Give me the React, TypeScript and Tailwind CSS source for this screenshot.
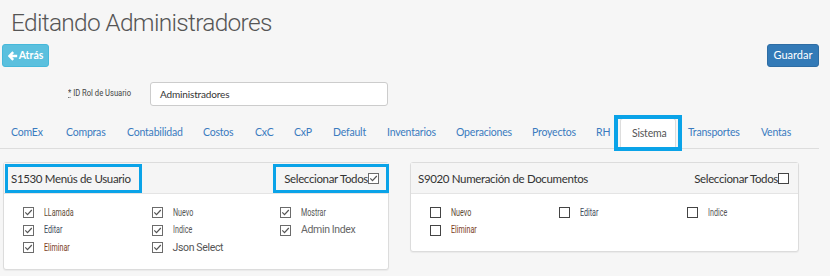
import React from "react";

const tabs: [string, number][] = [["ComEx",54],["Compras",61],["Contabilidad",76],["Costos",52],["CxC",39],["CxP",39],["Default",54],["Inventarios",69],["Operaciones",76],["Proyectos",64],["RH",36],["Sistema",56],["Transportes",73],["Ventas",60]];

function Box({ checked }: { checked: boolean }) {
  return (
    <svg width="11" height="11" viewBox="0 0 11 11" className="shrink-0">
      <rect x="0.5" y="0.5" width="10" height="10" fill="#fff" stroke={checked ? "#6b6b6b" : "#444"} strokeWidth="1" />
      {checked && <path d="M2.3 5.4 L4.5 7.6 L8.8 3.0" fill="none" stroke="#555" strokeWidth="1.2" />}
    </svg>
  );
}

type Item = { label: string; color?: string; narrow?: boolean } | null;

function Panel({ title, checked, rows, all, highlight, w, selW, selPr }: { title: string; checked: boolean; rows: Item[][]; all: boolean; highlight?: boolean; w: string; selW: string; selPr: string }) {
  const hl = highlight ? "border-[#0aa3e8]" : "border-transparent";
  return (
    <div className={`${w} bg-white border border-[#dcdcdc] rounded-[3px] shadow-[0_1px_1px_rgba(0,0,0,0.05)]`}>
      <div className="h-[31px] bg-[#f5f5f5] border-b border-[#e4e4e4] flex items-start justify-between pl-[1px] text-[11.5px] tracking-[-0.35px] text-[#333]">
        <div className={`mt-[1px] h-[29px] border-[3px] ${hl} flex items-center pl-[3px] whitespace-nowrap ${highlight ? "w-[137px]" : ""}`}>{title}</div>
        <div className={`mt-[1px] -mr-[1px] h-[29px] border-[3px] ${hl} flex items-center justify-end ${selPr} ${selW} whitespace-nowrap`}>Seleccionar Todos<Box checked={all} /></div>
      </div>
      <div className="pt-[10px] pb-[12px] pl-[19px]">
        {rows.map((r, i) => (
          <div key={i} className="grid grid-cols-[128.5px_128.5px_128.5px] h-[17.5px] items-center">
            {r.map((it, j) => (
              <div key={j} className="flex items-center">
                {it && <>
                  <Box checked={checked} />
                  {it.narrow === false ? (
                    <span className="ml-[10px] text-[10.5px] tracking-[-0.35px] whitespace-nowrap" style={{ color: it.color || "#555", fontFamily: 'Roboto, sans-serif' }}>{it.label}</span>
                  ) : (
                    <span className="ml-[10px] inline-block origin-left scale-x-[0.68] text-[10.5px] whitespace-nowrap" style={{ color: it.color || "#555", fontFamily: 'Roboto, sans-serif' }}>{it.label}</span>
                  )}
                </>}
              </div>
            ))}
          </div>
        ))}
      </div>
    </div>
  );
}

export default function App() {
  return (
    <div className="min-h-[276px] w-[830px] bg-[#f6f6f6] pt-[8px] pl-[2px] pr-[11px]" style={{ fontFamily: 'Lato, "Open Sans", sans-serif' }}>
      <h1 className="h-[30px] leading-[30px] pl-[9px] text-[24.5px] font-light text-[#555] tracking-[-0.7px] whitespace-nowrap" style={{ fontFamily: 'Roboto, sans-serif' }}>Editando Administradores</h1>
      <div className="mt-[6px] flex justify-between">
        <button className="h-[23px] w-[47px] rounded-[3px] bg-[#5bc0de] border border-[#46b8da] text-white text-[10.5px] font-bold flex items-center justify-center gap-[1px]">
          <svg width="10" height="10" viewBox="0 0 10 10"><path d="M5.2 1.2 L1.4 5 L5.2 8.8 M1.8 5 H9.2" fill="none" stroke="#fff" strokeWidth="2.4" /></svg>
          Atrás
        </button>
        <button className="h-[23px] w-[52px] rounded-[3px] bg-[#337ab7] border border-[#2e6da4] text-white text-[11px]">Guardar</button>
      </div>
      <div className="mt-[15px] flex items-center">
        <div className="ml-[66px] w-[82px] -mt-[8px]">
          <span className="inline-block origin-left scale-x-[0.8] text-[9.5px] text-[#444] whitespace-nowrap" style={{ fontFamily: 'Roboto, sans-serif' }}><span className="underline decoration-dotted">*</span> ID Rol de Usuario</span>
        </div>
        <div className="h-[24px] w-[238px] bg-white border border-[#ccc] rounded-[3px] flex items-center pl-[9px] text-[10px] tracking-[-0.15px] text-[#333]">Administradores</div>
      </div>
      <div className="mt-[12px] flex border-b border-[#ddd] h-[31px] -ml-[2px]">
        {tabs.map(([t, w], i) => t === "Sistema" ? (
          <div key={t} className="relative shrink-0 h-[31px] pl-[11px] bg-white border border-[#ddd] border-b-white rounded-t-[3px] flex items-center text-[10.5px] tracking-[-0.2px] text-[#555]" style={{ width: w }}>
            {t}
            <span className="absolute left-[-7px] right-[-7px] top-[-4px] bottom-[-3px] border-[4px] border-[#0aa3e8]" />
          </div>
        ) : (
          <div key={t} className={`shrink-0 h-[30px] ${i === 0 ? "pl-[11px]" : "pl-[12px]"} flex items-center text-[10.5px] tracking-[-0.2px] text-[#3a7bbf] whitespace-nowrap`} style={{ width: w }}>{t}</div>
        ))}
      </div>
      <div className="mt-[13px] flex items-start gap-[21px] pl-[1px]">
        <Panel w="w-[386px]" selW="w-[116px]" selPr="pr-[7px]" title="S1530 Menús de Usuario" checked={true} all={true} highlight
          rows={[[{ label: "LLamada", color: "#5e4a36" }, { label: "Nuevo" }, { label: "Mostrar" }],
                 [{ label: "Editar", color: "#3d4a5c" }, { label: "Indice" }, { label: "Admin Index", color: "#666", narrow: false }],
                 [{ label: "Eliminar", color: "#7a3e1e" }, { label: "Json Select", narrow: false }, null]]} />
        <Panel w="w-[389px]" selW="" selPr="pr-[7px]" title="S9020 Numeración de Documentos" checked={false} all={false}
          rows={[[{ label: "Nuevo", color: "#5e4a36" }, { label: "Editar", color: "#3d4a5c" }, { label: "Indice" }],
                 [{ label: "Eliminar", color: "#7a3e1e" }, null, null]]} />
      </div>
    </div>
  );
}
